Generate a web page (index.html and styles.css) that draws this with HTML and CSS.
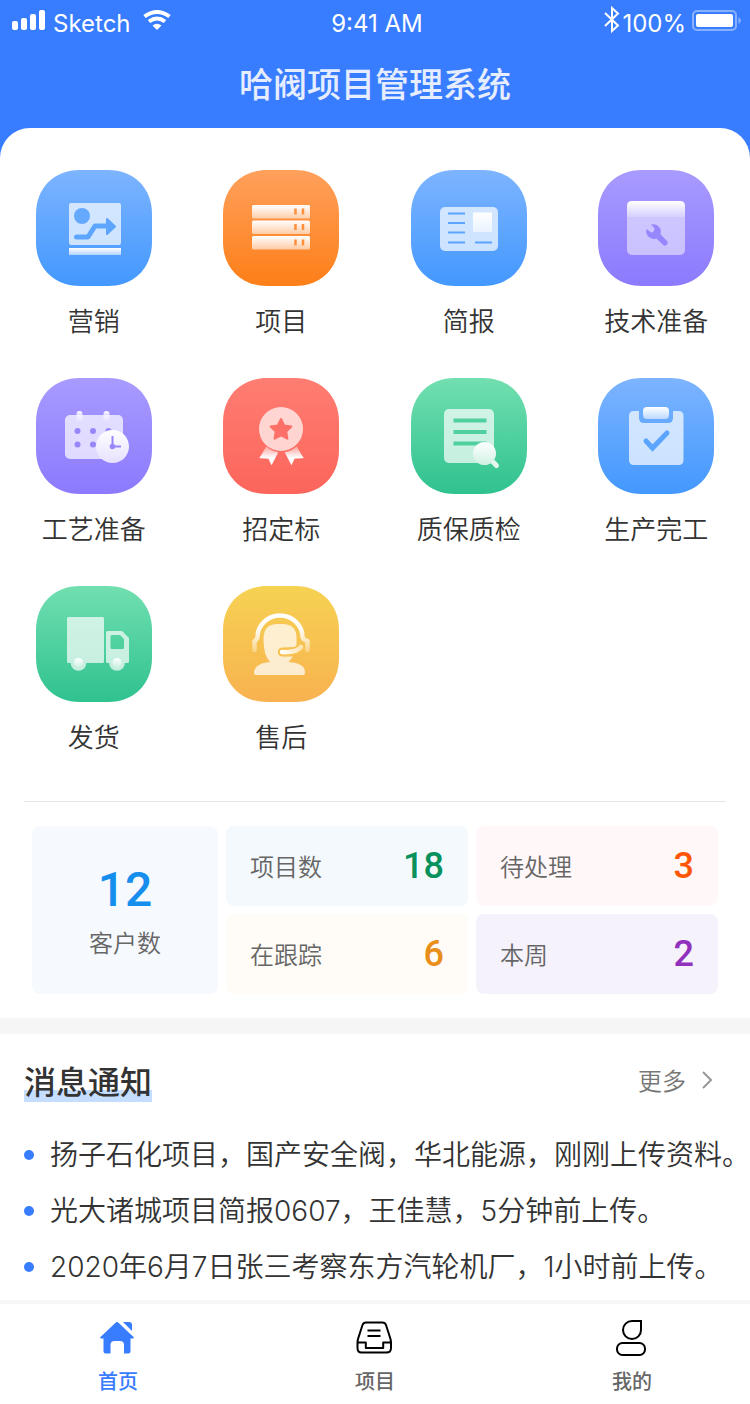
FILE: index.html
```html
<!DOCTYPE html>
<html lang="zh-CN">
<head>
  <meta charset="UTF-8">
  <meta name="viewport" content="width=device-width, initial-scale=1.0">
  <title>哈阀项目管理系统</title>
  <link rel="stylesheet" href="styles.css">
</head>
<body>
  <!-- shared gradients -->
  <svg class="defs" width="0" height="0" aria-hidden="true">
    <defs>
      <linearGradient id="blue" x1="0" y1="0" x2="0" y2="1"><stop offset="0" stop-color="#7db4ff"/><stop offset="1" stop-color="#4398ff"/></linearGradient>
      <linearGradient id="orange" x1="0" y1="0" x2="0" y2="1"><stop offset="0" stop-color="#ffa05c"/><stop offset="1" stop-color="#fd7f18"/></linearGradient>
      <linearGradient id="purple" x1="0" y1="0" x2="0" y2="1"><stop offset="0" stop-color="#a89bff"/><stop offset="1" stop-color="#8b7afd"/></linearGradient>
      <linearGradient id="red" x1="0" y1="0" x2="0" y2="1"><stop offset="0" stop-color="#ff7d72"/><stop offset="1" stop-color="#fc655b"/></linearGradient>
      <linearGradient id="green" x1="0" y1="0" x2="0" y2="1"><stop offset="0" stop-color="#72dfb0"/><stop offset="1" stop-color="#2fc28f"/></linearGradient>
      <linearGradient id="yellow" x1="0" y1="0" x2="0" y2="1"><stop offset="0" stop-color="#f6d252"/><stop offset="1" stop-color="#f8b250"/></linearGradient>
      <linearGradient id="fade" x1="0" y1="0" x2="0" y2="1"><stop offset="0" stop-color="#fff"/><stop offset="1" stop-color="#fff" stop-opacity=".55"/></linearGradient>
      <linearGradient id="fade-soft" x1="0" y1="0" x2="0" y2="1"><stop offset="0" stop-color="#fff"/><stop offset="1" stop-color="#fff" stop-opacity=".15"/></linearGradient>
      <linearGradient id="fade-up" x1="0" y1="0" x2="0" y2="1"><stop offset="0" stop-color="#fff" stop-opacity=".4"/><stop offset=".6" stop-color="#fff"/></linearGradient>
      <linearGradient id="clock" x1="0" y1="0" x2="0" y2="1"><stop offset="0" stop-color="#fff"/><stop offset="1" stop-color="#e6e1ff"/></linearGradient>
      <linearGradient id="lens" x1="0" y1="0" x2="0" y2="1"><stop offset="0" stop-color="#fff"/><stop offset="1" stop-color="#d0f1e4"/></linearGradient>
      <linearGradient id="band" gradientUnits="userSpaceOnUse" x1="0" y1="28" x2="0" y2="66"><stop offset="0" stop-color="#fff"/><stop offset=".45" stop-color="#fff" stop-opacity=".9"/><stop offset="1" stop-color="#fff" stop-opacity=".3"/></linearGradient>
      <linearGradient id="mic" gradientUnits="userSpaceOnUse" x1="58" y1="0" x2="80" y2="0"><stop offset="0" stop-color="#fff"/><stop offset="1" stop-color="#fbe2ac"/></linearGradient>
      <path id="tile" d="M44 0h28c26 0 44 18 44 44v28c0 26-18 44-44 44H44C18 116 0 98 0 72V44C0 18 18 0 44 0z"/>
    </defs>
  </svg>

  <div class="app">
    <header class="header">
      <div class="status">
        <div class="status-left">
          <svg width="34" height="26" viewBox="0 0 34 26" fill="#fff" aria-hidden="true">
            <rect x="0" y="11" width="6" height="9" rx="2"/><rect x="9" y="8" width="6" height="12" rx="2"/><rect x="18" y="4" width="6" height="16" rx="2"/><rect x="27" y="0" width="6" height="20" rx="2"/>
          </svg>
          <span>Sketch</span>
          <svg class="wifi" width="28" height="26" viewBox="0 0 28 26" aria-hidden="true">
            <g fill="none" stroke="#fff" stroke-width="4"><path d="M1.500 6.500Q14-2.500 26.500 6.500"/><path d="M6 11.500Q14 5.500 22 11.500"/></g>
            <path d="M14 20l-4.500-4.500Q14 12 18.500 15.500z" fill="#fff"/>
          </svg>
        </div>
        <span>9:41 AM</span>
        <div class="status-right">
          <svg width="16" height="34" viewBox="0 0 16 34" fill="none" stroke="#fff" stroke-width="2" aria-hidden="true"><path d="M1 7l13 12.500-6 5.500V2l6 5.500L1 20"/></svg>
          <span>100%</span>
          <svg class="battery" width="50" height="26" viewBox="0 0 50 26" aria-hidden="true">
            <rect x="1" y="1" width="43" height="19" rx="4" fill="none" stroke="#fff" stroke-opacity=".4" stroke-width="2"/>
            <rect x="4" y="4" width="37" height="13" rx="2" fill="#fff"/><path d="M46.500 7q5 3.500 0 7z" fill="#fff" fill-opacity=".4"/>
          </svg>
        </div>
      </div>
      <h1>哈阀项目管理系统</h1>
    </header>

    <main class="panel">
      <nav class="menu">
        <a href="#">
          <svg viewBox="0 0 116 116" aria-hidden="true"><use href="#tile" fill="url(#blue)"/>
            <rect x="33" y="33" width="52" height="42" rx="2" fill="#fff" fill-opacity=".7"/>
            <circle cx="46" cy="46" r="8" fill="#65a9ff"/>
            <path d="M40.500 67H52l7-11h13" fill="none" stroke="#5ea5ff" stroke-width="5" stroke-linecap="round" stroke-linejoin="round"/>
            <path d="M71 49l8 7.500-8 7.500z" fill="#5ea5ff" stroke="#5ea5ff" stroke-width="2" stroke-linejoin="round"/>
            <rect x="33" y="78" width="52" height="7" fill="url(#fade)"/>
          </svg>
          <span>营销</span>
        </a>
        <a href="#">
          <svg viewBox="0 0 116 116" aria-hidden="true"><use href="#tile" fill="url(#orange)"/>
            <g fill="url(#fade)"><rect x="29" y="35" width="58" height="13.500" rx="1.500"/><rect x="29" y="50.500" width="58" height="13.500" rx="1.500"/><rect x="29" y="66" width="58" height="13.500" rx="1.500"/></g>
            <path d="M72.500 38.500v6m7.500-6v6m-7.500 9.500v6m7.500-6v6m-7.500 9.500v6m7.500-6v6" stroke="#fe8f3c" stroke-width="2.500"/>
          </svg>
          <span>项目</span>
        </a>
        <a href="#">
          <svg viewBox="0 0 116 116" aria-hidden="true"><use href="#tile" fill="url(#blue)"/>
            <rect x="29" y="37" width="58" height="44" rx="5" fill="#fff" fill-opacity=".7"/>
            <path d="M37 43.500h17M37 53h17M37 62.500h17M37 72.500h17m10 0h17" stroke="#5ca4ff" stroke-width="2"/>
            <rect x="62" y="42.500" width="19" height="19.500" fill="url(#fade)"/>
          </svg>
          <span>简报</span>
        </a>
        <a href="#">
          <svg viewBox="0 0 116 116" aria-hidden="true"><use href="#tile" fill="url(#purple)"/>
            <rect x="29" y="31" width="58" height="54" rx="5" fill="#fff" fill-opacity=".5"/>
            <path d="M29 47V36q0-5 5-5h48q5 0 5 5v11z" fill="url(#fade-soft)"/>
            <path d="M53 54.600a7.500 7.500 0 0 1 9.400 9.600l6.400 6.600a2.700 2.700 0 0 1-3.900 3.900l-6.500-6.300a7.500 7.500 0 0 1-9.800-9.300l4.200 3.200q2 .6 3-1t.4-3.400z" fill="#9787fe"/>
          </svg>
          <span>技术准备</span>
        </a>
        <a href="#">
          <svg viewBox="0 0 116 116" aria-hidden="true"><use href="#tile" fill="url(#purple)"/>
            <rect x="29" y="37" width="58" height="44" rx="5" fill="#fff" fill-opacity=".7"/>
            <g fill="url(#fade-soft)"><rect x="40.500" y="33" width="6" height="10" rx="3"/><rect x="67.500" y="33" width="6" height="10" rx="3"/></g>
            <g fill="#9688fb"><circle cx="41.500" cy="53" r="3"/><circle cx="57" cy="53" r="3"/><circle cx="72.500" cy="53" r="3"/><circle cx="41.500" cy="66.500" r="3"/><circle cx="57" cy="66.500" r="3"/></g>
            <circle cx="76.500" cy="68.500" r="16.500" fill="url(#clock)"/>
            <path d="M76.500 58v10.500H85" fill="none" stroke="#9688fb" stroke-width="2"/><circle cx="76.500" cy="68.500" r="2.800" fill="#9688fb"/>
          </svg>
          <span>工艺准备</span>
        </a>
        <a href="#">
          <svg viewBox="0 0 116 116" aria-hidden="true"><use href="#tile" fill="url(#red)"/>
            <circle cx="58" cy="51" r="22" fill="#fff" fill-opacity=".7"/>
            <path d="M58 41l3.200 6.500 7.200 1-5.200 5 1.200 7.200L58 57.400l-6.400 3.300 1.200-7.200-5.200-5 7.200-1z" fill="#fd7067" stroke="#fd7067" stroke-width="2" stroke-linejoin="round"/>
            <g fill="url(#fade-up)" stroke="#fff" stroke-opacity=".3" stroke-linejoin="round"><path d="M43.500 69q5 4.500 11.500 5.500l-6.500 12.500-3-6.500-9-.5z"/><path d="M73.500 69q-5 4.500-11.500 5.500l6.500 12.500 3-6.500 9-.5z"/></g>
          </svg>
          <span>招定标</span>
        </a>
        <a href="#">
          <svg viewBox="0 0 116 116" aria-hidden="true"><use href="#tile" fill="url(#green)"/>
            <rect x="33" y="31" width="50" height="54" rx="5" fill="#fff" fill-opacity=".7"/>
            <path d="M42.500 42.500h33m-33 11.500h33m-33 11.500h33" stroke="#50d09f" stroke-width="4"/>
            <path d="M81 83l4.500 4.500" stroke="#e3f7ef" stroke-width="5" stroke-linecap="round"/>
            <circle cx="73.500" cy="75.500" r="11.500" fill="url(#lens)"/>
          </svg>
          <span>质保质检</span>
        </a>
        <a href="#">
          <svg viewBox="0 0 116 116" aria-hidden="true"><use href="#tile" fill="url(#blue)"/>
            <path d="M36 33h5v7q0 5 5 5h24q5 0 5-5v-7h5.500q5 0 5 5v44q0 5-5 5H36q-5 0-5-5V38q0-5 5-5z" fill="#fff" fill-opacity=".7"/>
            <rect x="45" y="29" width="26" height="12" rx="4" fill="url(#fade)"/>
            <path d="M48 63l6.500 7L69 55" fill="none" stroke="#5ba4ff" stroke-width="5" stroke-linecap="round"/>
          </svg>
          <span>生产完工</span>
        </a>
        <a href="#">
          <svg viewBox="0 0 116 116" aria-hidden="true"><use href="#tile" fill="url(#green)"/>
            <g fill="#fff" opacity=".7">
              <rect x="31" y="31" width="37" height="46" rx="1.500"/>
              <path fill-rule="evenodd" d="M71.500 45H86l7 7v23.500q0 1.500-1.500 1.500h-20Q70 77 70 75.500v-29Q70 45 71.500 45zm4.500 4q-1.500 0-1.500 1.500v11q0 1.500 1.500 1.500h10.500q1.500 0 1.500-1.500V53l-4-4z"/>
              <circle cx="42.500" cy="77" r="7.800"/><circle cx="81" cy="77" r="7.800"/>
            </g>
            <g fill="url(#lens)"><circle cx="42.500" cy="76.500" r="4.500"/><circle cx="81" cy="76.500" r="4.500"/></g>
          </svg>
          <span>发货</span>
        </a>
        <a href="#">
          <svg viewBox="0 0 116 116" aria-hidden="true"><use href="#tile" fill="url(#yellow)"/>
            <path d="M40.500 53q0-15 14-15h5q14 0 14 14v9l-14 .5a4.500 4.500 0 0 0 0 9H70l-4.500 5.500q16.500 1 16.500 10.500 0 2.500-2 2.500H33q-2 0-2-2.500Q32 77 47 76q-6.500-6-6.500-23z" fill="#fff" fill-opacity=".73"/>
            <path d="M31.500 64V55q2.500-1 3-4a22.500 21.500 0 0 1 45 0q.5 3 5 4v9" fill="none" stroke="url(#band)" stroke-width="4.500" stroke-linecap="round" stroke-linejoin="round"/>
            <path d="M59 66q14 1 19-5" fill="none" stroke="#f7c251" stroke-width="8" stroke-linecap="round"/>
            <path d="M59 66q14 1 19-5" fill="none" stroke="url(#mic)" stroke-width="4.500" stroke-linecap="round"/>
          </svg>
          <span>售后</span>
        </a>
      </nav>

      <section class="stats">
        <div class="stat stat-main"><strong>12</strong><span>客户数</span></div>
        <div class="stat stat-project"><span>项目数</span><strong>18</strong></div>
        <div class="stat stat-pending"><span>待处理</span><strong>3</strong></div>
        <div class="stat stat-follow"><span>在跟踪</span><strong>6</strong></div>
        <div class="stat stat-week"><span>本周</span><strong>2</strong></div>
      </section>

      <section class="news">
        <div class="news-head">
          <h2>消息通知</h2>
          <a href="#">更多
            <svg width="10" height="18" viewBox="0 0 10 18" fill="none" stroke="#999" stroke-width="2" aria-hidden="true"><path d="M1 1l8 8-8 8"/></svg>
          </a>
        </div>
        <ul>
          <li>扬子石化项目，国产安全阀，华北能源，刚刚上传资料。</li>
          <li>光大诸城项目简报0607，王佳慧，5分钟前上传。</li>
          <li>2020年6月7日张三考察东方汽轮机厂，1小时前上传。</li>
        </ul>
      </section>
    </main>

    <nav class="tabbar">
      <a class="active" href="#">
        <svg width="40" height="40" viewBox="0 0 40 40" fill="#387cff" aria-hidden="true">
          <path d="M17.500 4.800q1.500-1.400 3 0L35.500 19q1 1.300-.5 1.600h-2.500V33q0 2.500-2.500 2.500h-4V27q0-4-4-4h-5.500q-4 0-4 4v8.500H8Q5.500 35.500 5.500 33V20.600H3q-1.500-.3-.5-1.600z"/>
          <path d="M25 4h6q3 0 3 3v6z"/>
        </svg>
        <span>首页</span>
      </a>
      <a href="#">
        <svg width="40" height="40" viewBox="0 0 40 40" fill="none" stroke="#000" stroke-width="2" stroke-linejoin="round" aria-hidden="true">
          <path d="M11 4.500h16.500q2.500 0 3.500 2.500l4.500 14q.5 2 .5 4v5q0 4.500-4.500 4.500h-25Q2.500 34.500 2.500 30v-5q0-2 .5-4L7.500 7Q8.500 4.500 11 4.500z"/>
          <path d="M2.500 24.500h8.300V30h17.400v-5.500H36M12.500 12.500h13m-13 5.500h13"/>
        </svg>
        <span>项目</span>
      </a>
      <a href="#">
        <svg width="40" height="40" viewBox="0 0 40 40" fill="none" stroke="#000" stroke-width="2" aria-hidden="true">
          <path d="M20 3h9v9a9 9 0 1 1-9-9z"/><rect x="5" y="25" width="28" height="12" rx="5.500"/>
        </svg>
        <span>我的</span>
      </a>
    </nav>
  </div>
</body>
</html>
```

FILE: styles.css
```css
* {
  box-sizing: border-box;
}
body {
  margin: 0;
  font-family: "Noto Sans CJK SC", sans-serif;
  font-weight: 350;
  color: #333;
  background: #fff;
}
a {
  color: inherit;
  text-decoration: none;
}
svg {
  display: block;
  flex-shrink: 0;
}
.defs {
  position: absolute;
}
.app {
  background: #387cff;
}

/* header */
.header {
  height: 128px;
  color: #fff;
  text-align: center;
}
.status {
  display: grid;
  grid-template-columns: 1fr auto 1fr;
  align-items: center;
  height: 46px;
  padding: 0 8px 0 12px;
  font-family: Inter, sans-serif;
  font-size: 24px;
  font-weight: 400;
}
.status-left, .status-right {
  display: flex;
  align-items: center;
}
.status-left {
  gap: 7px;
}
.wifi {
  margin-left: 5px;
}
.status-right {
  justify-content: flex-end;
  gap: 2px;
}
.battery {
  margin-left: 4px;
}
h1 {
  margin: 0;
  font-size: 34px;
  font-weight: 500;
  line-height: 74px;
  color: #e5edff;
}

/* menu */
.panel {
  background: #fff;
  border-radius: 30px 30px 0 0;
}
.menu {
  display: grid;
  grid-template-columns: repeat(4, 1fr);
  row-gap: 41px;
  padding: 42px 0 48px;
}
.menu a {
  display: flex;
  flex-direction: column;
  align-items: center;
  gap: 17px;
  font-size: 26px;
  line-height: 34px;
}
.menu svg {
  width: 116px;
  height: 116px;
}

/* stats */
.stats {
  display: grid;
  grid-template-columns: 186fr 242fr 242fr;
  grid-auto-rows: 80px;
  gap: 8px;
  margin: 0 24px;
  padding: 24px 8px;
  border-top: 1px solid #e5e5e5;
}
.stat {
  display: flex;
  align-items: center;
  justify-content: space-between;
  padding: 0 24px;
  border-radius: 8px;
  font-size: 24px;
  line-height: 36px;
  color: #666;
}
.stat strong {
  font-family: Roboto, sans-serif;
  font-size: 36px;
  font-weight: 500;
}
.stat-main {
  grid-row: span 2;
  flex-direction: column;
  justify-content: center;
  gap: 4px;
  background: #f6faff;
}
.stat-main strong {
  font-size: 48px;
  line-height: 60px;
  color: #158eee;
}
.stat-project {
  background: #f3f9fc;
}
.stat-project strong {
  color: #08915c;
}
.stat-pending {
  background: #fff7f8;
}
.stat-pending strong {
  color: #ff5606;
}
.stat-follow {
  background: #fffcf7;
}
.stat-follow strong {
  color: #e98e18;
}
.stat-week {
  background: #f5f2fc;
}
.stat-week strong {
  color: #9131bd;
}

/* news */
.news {
  padding: 24px 0 5px 24px;
  border-top: 16px solid #f6f6f6;
}
.news-head {
  display: flex;
  align-items: center;
  justify-content: space-between;
  padding-right: 38px;
}
h2 {
  margin: 0;
  font-size: 32px;
  font-weight: 500;
  line-height: 44px;
  background: linear-gradient(#c5deff, #c5deff) bottom / 100% 12px no-repeat;
}
.news-head a {
  display: flex;
  align-items: center;
  gap: 16px;
  font-size: 24px;
  line-height: 36px;
  color: #777;
}
.news ul {
  margin: 25px 0 0;
  padding: 0;
  list-style: none;
}
.news li {
  display: flex;
  align-items: center;
  gap: 16px;
  font-family: Inter, "Noto Sans CJK SC", sans-serif;
  font-size: 28px;
  line-height: 56px;
  white-space: nowrap;
}
.news li::before {
  content: "";
  width: 10px;
  height: 10px;
  border-radius: 50%;
  background: #387cff;
}

/* bottom tabs */
.tabbar {
  display: flex;
  justify-content: space-between;
  padding: 14px 98px 9px;
  border-top: 4px solid #f7f7f7;
  background: #fff;
}
.tabbar a {
  display: flex;
  flex-direction: column;
  align-items: center;
  gap: 9px;
  font-size: 20px;
  font-weight: 500;
  line-height: 28px;
  color: #666;
}
.tabbar .active {
  color: #387cff;
}
```
